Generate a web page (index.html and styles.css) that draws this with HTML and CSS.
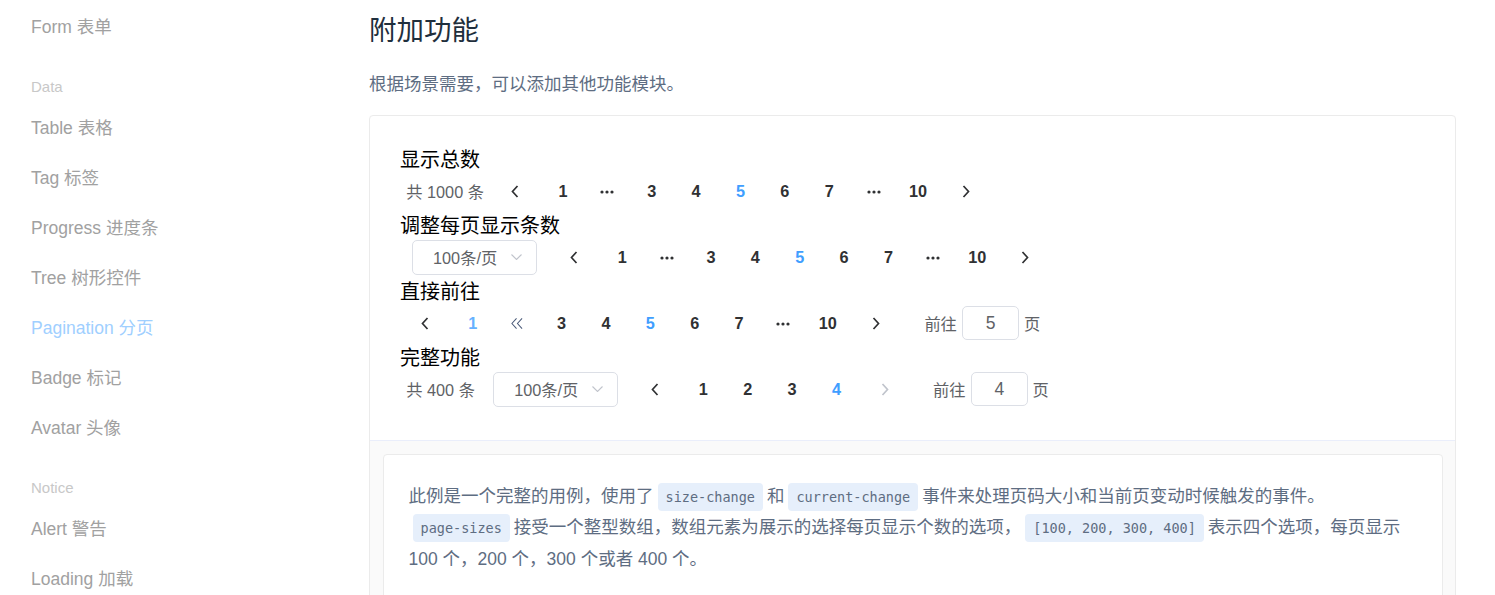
FILE: index.html
```html
<!DOCTYPE html>
<html lang="zh">
<head>
<meta charset="utf-8">
<title>Pagination 分页</title>
<link rel="stylesheet" href="styles.css">
</head>
<body>
<div class="page">
  <aside class="sidebar">
    <a class="nav-item">Form 表单</a>
    <div class="nav-group">Data</div>
    <a class="nav-item">Table 表格</a>
    <a class="nav-item">Tag 标签</a>
    <a class="nav-item">Progress 进度条</a>
    <a class="nav-item">Tree 树形控件</a>
    <a class="nav-item active">Pagination 分页</a>
    <a class="nav-item">Badge 标记</a>
    <a class="nav-item">Avatar 头像</a>
    <div class="nav-group">Notice</div>
    <a class="nav-item">Alert 警告</a>
    <a class="nav-item">Loading 加载</a>
  </aside>

  <main class="content">
    <h3 class="title">附加功能</h3>
    <p class="lead">根据场景需要，可以添加其他功能模块。</p>

    <div class="demo">
      <div class="demo-source">
        <div class="block">
          <div class="demonstration">显示总数</div>
          <div class="pagination">
            <span class="total">共 1000 条</span>
            <button class="btn-prev"><svg class="arrow" viewBox="0 0 8 13"><polyline points="6.5,1 1.5,6.5 6.5,12"/></svg></button>
            <ul class="pager">
              <li>1</li>
              <li class="more"><svg class="dots" viewBox="0 0 14 4"><circle cx="2" cy="2" r="1.6"/><circle cx="7" cy="2" r="1.6"/><circle cx="12" cy="2" r="1.6"/></svg></li>
              <li>3</li><li>4</li><li class="active">5</li><li>6</li><li>7</li>
              <li class="more"><svg class="dots" viewBox="0 0 14 4"><circle cx="2" cy="2" r="1.6"/><circle cx="7" cy="2" r="1.6"/><circle cx="12" cy="2" r="1.6"/></svg></li>
              <li>10</li>
            </ul>
            <button class="btn-next"><svg class="arrow" viewBox="0 0 8 13"><polyline points="1.5,1 6.5,6.5 1.5,12"/></svg></button>
          </div>
        </div>

        <div class="block">
          <div class="demonstration">调整每页显示条数</div>
          <div class="pagination">
            <div class="sizes">
              <span class="sizes-text">100条/页</span>
              <svg class="caret" viewBox="0 0 11 6"><polyline points="0.5,0.5 5.5,5.5 10.5,0.5"/></svg>
            </div>
            <button class="btn-prev"><svg class="arrow" viewBox="0 0 8 13"><polyline points="6.5,1 1.5,6.5 6.5,12"/></svg></button>
            <ul class="pager">
              <li>1</li>
              <li class="more"><svg class="dots" viewBox="0 0 14 4"><circle cx="2" cy="2" r="1.6"/><circle cx="7" cy="2" r="1.6"/><circle cx="12" cy="2" r="1.6"/></svg></li>
              <li>3</li><li>4</li><li class="active">5</li><li>6</li><li>7</li>
              <li class="more"><svg class="dots" viewBox="0 0 14 4"><circle cx="2" cy="2" r="1.6"/><circle cx="7" cy="2" r="1.6"/><circle cx="12" cy="2" r="1.6"/></svg></li>
              <li>10</li>
            </ul>
            <button class="btn-next"><svg class="arrow" viewBox="0 0 8 13"><polyline points="1.5,1 6.5,6.5 1.5,12"/></svg></button>
          </div>
        </div>

        <div class="block">
          <div class="demonstration">直接前往</div>
          <div class="pagination">
            <button class="btn-prev"><svg class="arrow" viewBox="0 0 8 13"><polyline points="6.5,1 1.5,6.5 6.5,12"/></svg></button>
            <ul class="pager">
              <li class="hover">1</li>
              <li class="more"><svg class="darrow" viewBox="0 0 13 13"><polyline points="6,1 1,6.5 6,12"/><polyline points="12,1 7,6.5 12,12"/></svg></li>
              <li>3</li><li>4</li><li class="active">5</li><li>6</li><li>7</li>
              <li class="more"><svg class="dots" viewBox="0 0 14 4"><circle cx="2" cy="2" r="1.6"/><circle cx="7" cy="2" r="1.6"/><circle cx="12" cy="2" r="1.6"/></svg></li>
              <li>10</li>
            </ul>
            <button class="btn-next"><svg class="arrow" viewBox="0 0 8 13"><polyline points="1.5,1 6.5,6.5 1.5,12"/></svg></button>
            <span class="jump">前往<span class="editor">5</span>页</span>
          </div>
        </div>

        <div class="block">
          <div class="demonstration">完整功能</div>
          <div class="pagination">
            <span class="total">共 400 条</span>
            <div class="sizes">
              <span class="sizes-text">100条/页</span>
              <svg class="caret" viewBox="0 0 11 6"><polyline points="0.5,0.5 5.5,5.5 10.5,0.5"/></svg>
            </div>
            <button class="btn-prev"><svg class="arrow" viewBox="0 0 8 13"><polyline points="6.5,1 1.5,6.5 6.5,12"/></svg></button>
            <ul class="pager">
              <li>1</li><li>2</li><li>3</li><li class="active">4</li>
            </ul>
            <button class="btn-next disabled"><svg class="arrow" viewBox="0 0 8 13"><polyline points="1.5,1 6.5,6.5 1.5,12"/></svg></button>
            <span class="jump">前往<span class="editor">4</span>页</span>
          </div>
        </div>
      </div>

      <div class="meta">
        <div class="description">此例是一个完整的用例，使用了<code>size-change</code>和<code>current-change</code>事件来处理页码大小和当前页变动时候触发的事件。<code>page-sizes</code>接受一个整型数组，数组元素为展示的选择每页显示个数的选项，<code>[100, 200, 300, 400]</code>表示四个选项，每页显示 100 个，200 个，300 个或者 400 个。</div>
      </div>
    </div>
  </main>
</div>
</body>
</html>
```

FILE: styles.css
```css
html, body {
  margin: 0;
  padding: 0;
  background: #fff;
  overflow: hidden;
}

body {
  font-family: "Liberation Sans", "Noto Sans CJK SC", sans-serif;
  color: #303133;
}

.page {
  display: flex;
  align-items: flex-start;
  width: 1495px;
  height: 595px;
  overflow: hidden;
}

/* ---------- sidebar ---------- */
.sidebar {
  width: 338px;
  flex: none;
  padding: 2px 0 0 31px;
  display: flex;
  flex-direction: column;
}

.nav-item {
  display: block;
  height: 50px;
  line-height: 50px;
  font-size: 17.5px;
  color: #a1a1a1;
  white-space: nowrap;
}

.nav-item.active {
  color: #a0cfff;
}

.nav-group {
  margin-top: 18.75px;
  height: 32px;
  line-height: 32px;
  font-size: 15px;
  color: #c8c8c8;
}

/* ---------- main ---------- */
.content {
  flex: 1;
  min-width: 0;
  padding-right: 39px;
}

.title {
  margin: 11px 0 0;
  font-size: 27.5px;
  line-height: 40px;
  font-weight: 400;
  color: #1f2f3d;
}

.lead {
  margin: 20px 0 18px;
  font-size: 17.5px;
  line-height: 26px;
  color: #5e6d82;
}

.demo {
  border: 1px solid #ebebeb;
  border-radius: 4px;
}

.demo-source {
  padding: 30px;
}

.demonstration {
  height: 24px;
  padding-top: 2px;
  line-height: 24px;
  font-size: 20px;
  color: #000;
}

/* ---------- pagination ---------- */
.pagination {
  display: flex;
  align-items: center;
  box-sizing: border-box;
  height: 40px;
  padding: 0 6.25px 2px;
  white-space: nowrap;
  font-weight: 700;
  font-size: 16.25px;
  color: #303133;
}

.total {
  margin-right: 12.5px;
  font-weight: 400;
  color: #606266;
}

.sizes {
  box-sizing: border-box;
  width: 125px;
  height: 35px;
  margin: 0 18.4px 0 6px;
  border: 1px solid #dcdfe6;
  border-radius: 5px;
  font-weight: 400;
  color: #606266;
  display: flex;
  align-items: center;
}

.sizes-text {
  display: block;
  width: 83.75px;
  margin-left: 10px;
  text-align: center;
}

.caret {
  width: 11px;
  height: 6px;
  margin-left: 4px;
  fill: none;
  stroke: #c0c4cc;
  stroke-width: 1.1;
}

.btn-prev,
.btn-next {
  box-sizing: border-box;
  width: 44.375px;
  height: 35px;
  border: 0;
  background: transparent;
  margin: 0;
  display: flex;
  align-items: center;
  justify-content: center;
  color: #303133;
}

.btn-prev {
  padding: 0 7.5px 0 0;
}

.btn-next {
  padding: 0 0 0 7.5px;
}

.btn-next.disabled {
  color: #c0c4cc;
}

.arrow {
  width: 8px;
  height: 13px;
  fill: none;
  stroke: currentColor;
  stroke-width: 1.7;
}

.pager {
  display: flex;
  list-style: none;
  margin: 0;
  padding: 0;
}

.pager li {
  width: 44.375px;
  height: 35px;
  line-height: 35px;
  text-align: center;
  display: flex;
  align-items: center;
  justify-content: center;
}

.pager li.active {
  color: #409eff;
}

.pager li.hover {
  color: #66b1ff;
}

.dots {
  width: 14px;
  height: 4px;
  margin-top: 2px;
  fill: #303133;
}

.darrow {
  width: 12px;
  height: 13px;
  fill: none;
  stroke: #4a5a78;
  stroke-width: 1.1;
}

.jump {
  display: flex;
  align-items: center;
  margin-left: 30px;
  font-weight: 400;
  color: #606266;
}

.editor {
  box-sizing: border-box;
  width: 56.5px;
  height: 34px;
  margin: 0 5px 0 5.5px;
  border: 1px solid #dcdfe6;
  border-radius: 5px;
  text-align: center;
  line-height: 32px;
  font-size: 17.5px;
  color: #606266;
}

/* ---------- meta ---------- */
.meta {
  background: #fafafa;
  border-top: 1px solid #eaeefb;
  padding: 12.5px;
  height: 300px;
}

.description {
  box-sizing: border-box;
  padding: 26px 25px 25px;
  border: 1px solid #ebebeb;
  border-radius: 4px;
  background: #fff;
  font-size: 17.5px;
  line-height: 31.5px;
  color: #5e6d82;
}

.description code {
  display: inline-block;
  height: 28px;
  line-height: 28px;
  padding: 0 8px;
  margin: 0 4px;
  border-radius: 4px;
  background: #e6effb;
  color: #5e6d82;
  font-family: "DejaVu Sans Mono", "Liberation Mono", monospace;
  font-size: 13.5px;
  vertical-align: middle;
}
```
